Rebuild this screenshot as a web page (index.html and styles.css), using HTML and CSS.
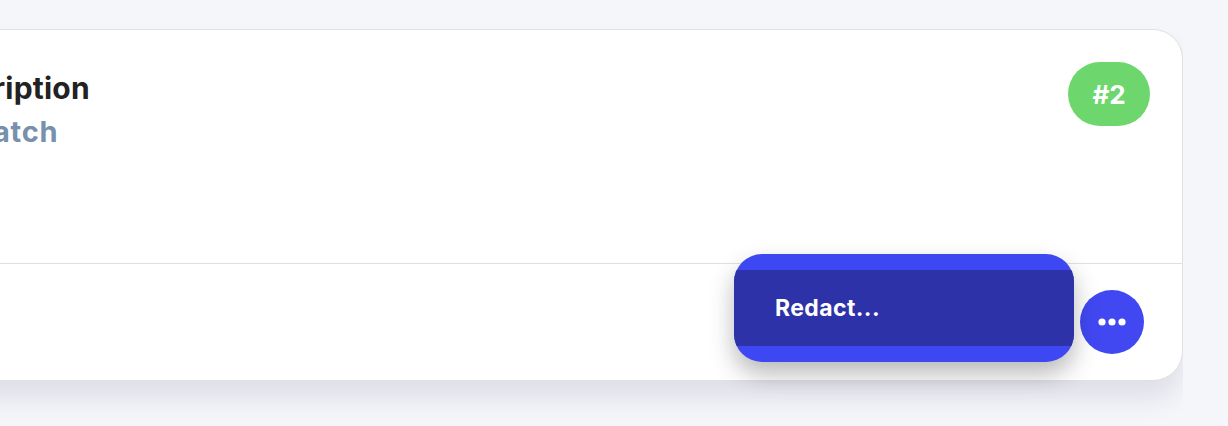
FILE: index.html
```html
<!DOCTYPE html>
<html lang="en">
<head>
  <meta charset="UTF-8">
  <meta name="viewport" content="width=device-width, initial-scale=1.0">
  <title>Plan card</title>
  <link rel="stylesheet" href="styles.css">
</head>
<body>
  <div class="board">
    <div class="card">
      <div class="card-top">
        <div class="plan">
          <h2 class="plan-title">Subscription</h2>
          <div class="plan-sub">Stopwatch</div>
        </div>
        <span class="badge">#2</span>
      </div>
      <div class="card-foot">
        <button class="more" aria-label="More">
          <svg width="28" height="8" viewBox="0 0 28 8"><circle cx="4" cy="4" r="3.6" fill="#fff"/><circle cx="14" cy="4" r="3.6" fill="#fff"/><circle cx="24" cy="4" r="3.6" fill="#fff"/></svg>
        </button>
      </div>
      <ul class="menu">
        <li class="menu-item">Redact...</li>
      </ul>
    </div>
  </div>
</body>
</html>
```

FILE: styles.css
```css
body {
  font-family: Inter, "Noto Sans", sans-serif;
  background-color: #f5f6fa;
  margin: 0;
}
.board {
  margin-right: 45px;
  padding: 29px 0 50px;
  overflow: hidden;
}
.card {
  position: relative;
  margin-left: -500px;
  background: white;
  border: 1px solid #e0e0e2;
  border-radius: 30px;
  box-shadow: 0 18px 26px rgba(30, 35, 70, 0.1);
}
.card-top {
  display: flex;
  justify-content: space-between;
  align-items: flex-start;
  height: 234px;
  padding: 32px 32px 0 399px;
  box-sizing: border-box;
  border-bottom: 1px solid #e0e0e2;
}
.plan-title {
  margin: 9px 0 0;
  font-size: 30px;
  line-height: 34px;
  font-weight: 700;
  letter-spacing: 0.2px;
  color: #222;
}
.plan-sub {
  margin-top: 10px;
  font-size: 29px;
  line-height: 34px;
  font-weight: 700;
  letter-spacing: 0.7px;
  color: #7690ae;
}
.badge {
  display: flex;
  align-items: center;
  justify-content: center;
  width: 82px;
  height: 64px;
  border-radius: 32px;
  background-color: #6dd76d;
  color: white;
  font-size: 26px;
  font-weight: 700;
}
.card-foot {
  display: flex;
  justify-content: flex-end;
  align-items: center;
  height: 116px;
  padding-right: 38px;
}
.more {
  display: flex;
  align-items: center;
  justify-content: center;
  width: 64px;
  height: 64px;
  border: none;
  border-radius: 50%;
  background-color: #4148f2;
  padding: 0;
  cursor: pointer;
}
.menu {
  position: absolute;
  left: 1233px;
  top: 224px;
  width: 340px;
  margin: 0;
  padding: 16px 0;
  list-style: none;
  box-sizing: border-box;
  overflow: hidden;
  background-color: #3e48f2;
  border-radius: 28px;
  box-shadow: 0 12px 24px rgba(0, 0, 0, 0.28);
}
.menu-item {
  height: 76px;
  padding: 0 41px;
  display: flex;
  align-items: center;
  background-color: #2d32a9;
  color: white;
  font-size: 23px;
  font-weight: 700;
  letter-spacing: 0.4px;
}
```
